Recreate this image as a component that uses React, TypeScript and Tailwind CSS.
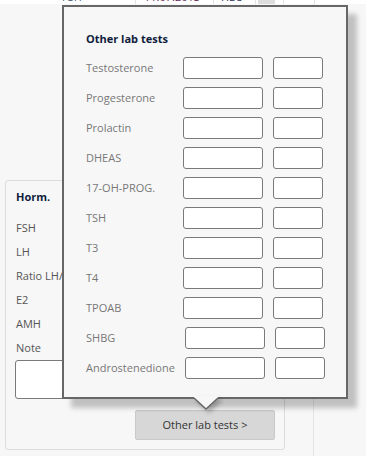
const tests = [
  'Testosterone',
  'Progesterone',
  'Prolactin',
  'DHEAS',
  '17-OH-PROG.',
  'TSH',
  'T3',
  'T4',
  'TPOAB',
  'SHBG',
  'Androstenedione',
];

const hormLabels = ['FSH', 'LH', 'Ratio LH/FSH', 'E2', 'AMH', 'Note'];

export default function App() {
  return (
    <div className="relative w-[366px] h-[456px] overflow-hidden bg-[#f7f7f7] font-['Open_Sans',sans-serif] text-[11px]">
      {/* table rows behind, cut off at the top */}
      <div className="flex h-[4px] overflow-hidden bg-white leading-[14px]">
        <div className="w-[62px]" />
        <div className="w-[73px] mt-[-10px] text-[#4b5b7d]">FSH</div>
        <div className="w-[78px] mt-[-10px] pl-[8px] border-l border-[#e2e2e2] text-[#6b2d5c]">11.07.2013</div>
        <div className="w-[42px] mt-[-10px] pl-[7px] border-l border-[#e2e2e2] text-[#1d2b4f]">HEU</div>
        <div className="w-[28px] border-l border-[#e2e2e2] pl-[2px]">
          <div className="w-[17px] h-[4px] bg-[#dedede]" />
        </div>
        <div className="w-[31px] border-l border-[#e2e2e2]" />
        <div className="flex-1 border-l border-[#e2e2e2]" />
      </div>

      <div className="flex h-[452px]">
        <div className="w-[314px] border-r border-[#e4e4e4] pl-[5px] pt-[176px]">
          {/* Horm. card */}
          <div className="w-[280px] h-[270px] border border-[#dcdcdc] rounded-[3px] px-[10px] pt-[8px]">
            <div className="h-[16px] leading-[16px] font-bold text-[#0f1d3d]">Horm.</div>
            <div className="mt-[11px] text-[#555]">
              {hormLabels.map((l) => (
                <div key={l} className="h-[24px] leading-[24px] whitespace-nowrap">{l}</div>
              ))}
            </div>
            <div className="ml-[-1px] w-[120px] h-[39px] bg-white border border-[#7a7a7a] rounded-[3px]" />
            <button className="mt-[11px] ml-[119px] w-[140px] h-[30px] bg-[#d7d7d7] border border-[#c9c9c9] rounded-[2px] text-[#333] text-[11px]">
              Other lab tests &gt;
            </button>
          </div>
        </div>
      </div>

      {/* popup */}
      <div className="absolute left-[62px] top-[5px] w-[286px] h-[394px] border-2 border-[#676767] bg-[#f7f7f7] pl-[22px] pt-[24px] shadow-[9px_9px_5px_rgba(0,0,0,0.22)]">
        <div className="h-[16px] leading-[16px] font-bold text-[#0f1d3d]">Other lab tests</div>
        <div className="mt-[10px] flex flex-col gap-[8px]">
          {tests.map((t, i) => (
            <div key={t} className="flex items-center h-[22px]">
              <div className={`${i >= 9 ? 'w-[99px]' : 'w-[97px]'} text-[#777] whitespace-nowrap`}>{t}</div>
              <div className="w-[80px] h-[22px] bg-white border border-[#7a7a7a] rounded-[3px]" />
              <div className="ml-[10px] w-[50px] h-[22px] bg-white border border-[#7a7a7a] rounded-[3px]" />
            </div>
          ))}
        </div>
      </div>

      {/* popup pointer */}
      <svg className="absolute left-[194px] top-[396px] drop-shadow-[3px_3px_2px_rgba(0,0,0,0.25)]" width="24" height="15" viewBox="0 0 24 15">
        <polygon points="0,0 24,0 24,2 12,13 0,2" fill="#f7f7f7" />
        <polyline points="0,2 12,13 24,2" fill="none" stroke="#676767" strokeWidth="1.5" />
      </svg>
    </div>
  );
}
